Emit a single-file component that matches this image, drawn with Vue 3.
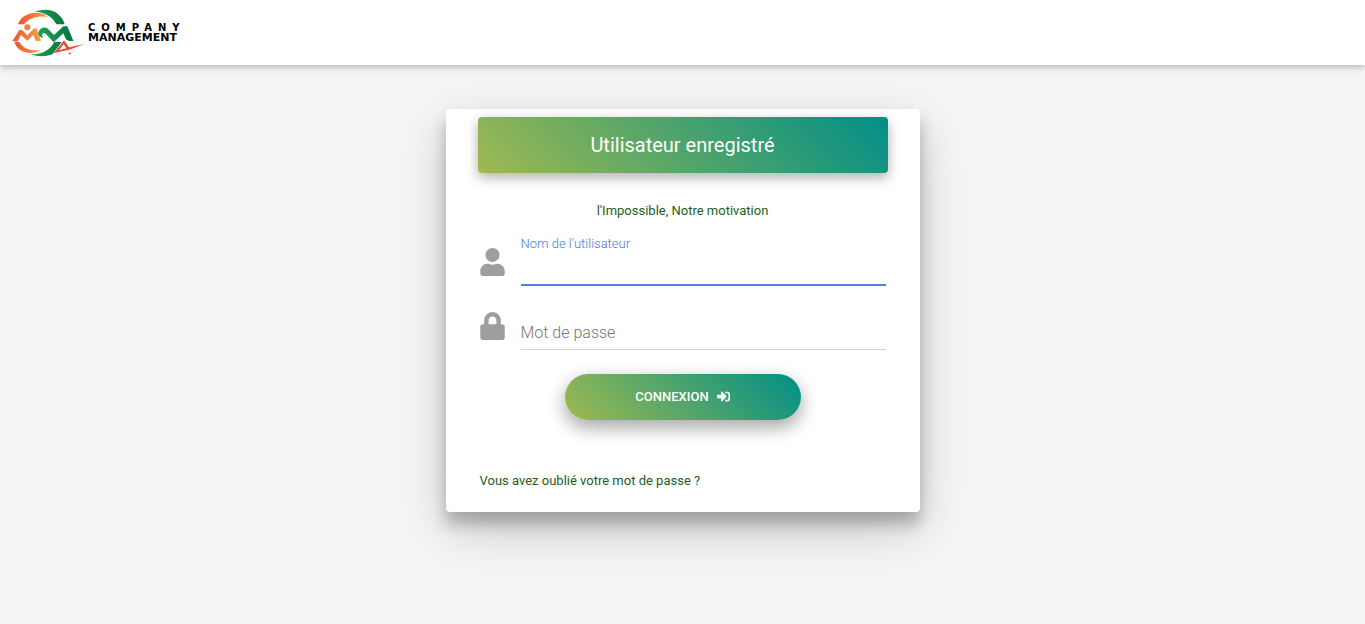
<script setup>
import { ref } from 'vue'

const username = ref('')
const password = ref('')
</script>

<template>
  <div class="page">
    <header class="topbar">
      <a class="brand" href="#" aria-label="Company Management">
        <svg class="mark" viewBox="0 0 240 168" aria-hidden="true">
          <defs>
            <linearGradient id="orange" x1="0" y1="0" x2="1" y2="0">
              <stop offset="0" stop-color="#ec5234" />
              <stop offset="1" stop-color="#f9a04c" />
            </linearGradient>
            <linearGradient id="green" x1="0" y1="0" x2="1" y2="0">
              <stop offset="0" stop-color="#1fa355" />
              <stop offset="1" stop-color="#067341" />
            </linearGradient>
          </defs>
          <path fill="url(#green)" d="M80 20C105 10 136 12 152 29C162 38 167 47 170 58L145 58C136 38 113 21 80 20Z" />
          <path fill="url(#orange)" d="M30 58C38 34 62 22 88 23C102 24 112 29 120 36C92 31 66 37 48 58Z" />
          <path fill="url(#orange)" d="M19 111L34 111C43 128 66 139 98 136C70 152 29 144 19 111Z" />
          <path fill="url(#green)" d="M68 147C100 150 127 135 139 111L171 111C158 146 109 164 68 147Z" />
          <circle cx="58" cy="67" r="9" fill="#f47c3c" />
          <path fill="url(#orange)" d="M13 109L34 75L42 75L58 91L79 70L86 71L99 108L83 108L76 89L58 107L39 90L29 109Z" />
          <path fill="url(#green)" d="M91 82C96 69 108 64 118 70L138 90L166 64L178 64L196 108L176 108L166 85L137 112L113 86C106 80 99 86 105 99C96 98 90 91 91 82Z" />
          <path fill="#fff" d="M134 147L168 101L196 113L184 133L160 147Z" />
          <path fill="#ee4834" fill-rule="evenodd" d="M137 145L168 106L183 127L230 117L184 134L162 139ZM153 136L175 130L167 117Z" />
          <path fill="#ee4834" d="M181 143L188 143L191 148L184 148Z" />
        </svg>
        <span class="wordmark">
          <span class="company">COMPANY</span>
          <span class="management">MANAGEMENT</span>
        </span>
      </a>
    </header>

    <main class="content">
      <form class="card" @submit.prevent>
        <h1 class="banner">Utilisateur enregistré</h1>
        <p class="motto">l'Impossible, Notre motivation</p>

        <div class="field active">
          <svg class="icon" viewBox="0 0 448 512" aria-hidden="true">
            <path d="M224 256c70.700 0 128-57.300 128-128S294.700 0 224 0 96 57.300 96 128s57.300 128 128 128zm89.600 32h-16.700c-22.200 10.200-46.900 16-72.900 16s-50.600-5.800-72.900-16h-16.700C60.200 288 0 348.200 0 422.400V464c0 26.500 21.500 48 48 48h352c26.500 0 48-21.500 48-48v-41.600c0-74.200-60.200-134.400-134.400-134.400z" />
          </svg>
          <div class="control">
            <label for="username">Nom de l'utilisateur</label>
            <input id="username" v-model="username" type="text" autocomplete="username" />
          </div>
        </div>

        <div class="field">
          <svg class="icon" viewBox="0 0 448 512" aria-hidden="true">
            <path d="M400 224h-24v-72C376 68.200 307.800 0 224 0S72 68.200 72 152v72H48c-26.500 0-48 21.500-48 48v192c0 26.500 21.500 48 48 48h352c26.500 0 48-21.500 48-48V272c0-26.500-21.500-48-48-48zm-104 0H152v-72c0-39.700 32.300-72 72-72s72 32.300 72 72v72z" />
          </svg>
          <div class="control">
            <label for="password">Mot de passe</label>
            <input id="password" v-model="password" type="password" autocomplete="current-password" />
          </div>
        </div>

        <button class="submit" type="submit">
          CONNEXION
          <svg class="login" viewBox="0 0 512 512" aria-hidden="true">
            <path d="M416 448h-84c-6.600 0-12-5.400-12-12v-40c0-6.600 5.400-12 12-12h84c17.700 0 32-14.300 32-32V160c0-17.700-14.300-32-32-32h-84c-6.600 0-12-5.400-12-12V76c0-6.600 5.400-12 12-12h84c53 0 96 43 96 96v192c0 53-43 96-96 96zm-47-209L201 71c-15-15-41-4.500-41 17v96H24c-13.300 0-24 10.700-24 24v96c0 13.300 10.700 24 24 24h136v96c0 21.500 26 32 41 17l168-168c9.300-9.400 9.300-24.600 0-34z" />
          </svg>
        </button>

        <a class="forgot" href="#">Vous avez oublié votre mot de passe ?</a>
      </form>
    </main>
  </div>
</template>

<style>
body {
  margin: 0;
  background: #f5f5f5;
}
</style>

<style scoped>
.page {
  min-height: 100vh;
  box-sizing: border-box;
  background: #f5f5f5;
  font-family: Roboto, "Liberation Sans", sans-serif;
  font-weight: 300;
  color: #1b5e20;
}

.topbar {
  display: flex;
  align-items: center;
  height: 65px;
  padding: 0 8px;
  box-sizing: border-box;
  background: #fff;
  box-shadow: 0 2px 5px rgba(0, 0, 0, 0.16), 0 2px 10px rgba(0, 0, 0, 0.12);
}

.brand {
  display: flex;
  align-items: center;
  color: #000;
  text-decoration: none;
}

.mark {
  width: 80px;
  height: 56px;
}

.wordmark {
  display: flex;
  flex-direction: column;
  font-family: "DejaVu Sans", sans-serif;
  font-weight: 700;
  font-size: 10px;
  line-height: 10px;
}

.company {
  letter-spacing: 6px;
}

.management {
  font-size: 11px;
}

.content {
  display: flex;
  justify-content: center;
  padding: 44px 16px;
}

.card {
  display: flex;
  flex-direction: column;
  width: 100%;
  max-width: 474px;
  padding: 8px 32px 21px;
  box-sizing: border-box;
  background: #fff;
  border-radius: 4px;
  box-shadow: 0 12px 15px rgba(0, 0, 0, 0.24), 0 17px 50px rgba(0, 0, 0, 0.19);
}

.banner {
  margin: 0;
  padding: 16px;
  border-radius: 4px;
  background: linear-gradient(45deg, #9fb950, #008f87);
  box-shadow: 0 5px 11px rgba(0, 0, 0, 0.18), 0 4px 15px rgba(0, 0, 0, 0.15);
  color: #fff;
  font-size: 20px;
  font-weight: 400;
  line-height: 24px;
  text-align: center;
}

.motto {
  margin: 28px 0 13px;
  font-size: 13px;
  font-weight: 400;
  line-height: 20px;
  text-align: center;
}

.field {
  display: flex;
  align-items: center;
  gap: 16px;
  height: 52px;
  margin: 0 2px 12px;
}

.icon {
  flex: none;
  width: 25px;
  height: 28px;
  margin-top: 4px;
  fill: #9e9e9e;
}

.control {
  display: grid;
  flex: 1;
  height: 52px;
}

.control label,
.control input {
  grid-area: 1 / 1;
}

.control label {
  align-self: end;
  padding-bottom: 7px;
  color: #757575;
  font-size: 16px;
  line-height: 20px;
}

.control input {
  width: 100%;
  box-sizing: border-box;
  padding: 16px 0 0;
  border: 0;
  border-bottom: 1px solid #ced4da;
  outline: 0;
  background: transparent;
  color: #495057;
  font: inherit;
  font-size: 16px;
}

.active .control label {
  align-self: start;
  padding: 0;
  color: #4a78dc;
  font-size: 13px;
}

.active .control input {
  border-bottom: 2px solid #4a86dc;
}

.submit {
  display: flex;
  align-items: center;
  justify-content: center;
  align-self: center;
  gap: 8px;
  width: 236px;
  height: 46px;
  margin: 12px 0 51px;
  padding: 0 0 2px;
  border: 0;
  border-radius: 23px;
  background: linear-gradient(45deg, #9fb950, #008f87);
  box-shadow: 0 8px 17px rgba(0, 0, 0, 0.2), 0 6px 20px rgba(0, 0, 0, 0.19);
  color: #fff;
  font: inherit;
  font-size: 13px;
  font-weight: 500;
  cursor: pointer;
}

.login {
  width: 13px;
  height: 13px;
  fill: currentColor;
}

.forgot {
  align-self: flex-start;
  margin-left: 2px;
  color: inherit;
  font-size: 13px;
  font-weight: 400;
  line-height: 20px;
  text-decoration: none;
}
</style>
